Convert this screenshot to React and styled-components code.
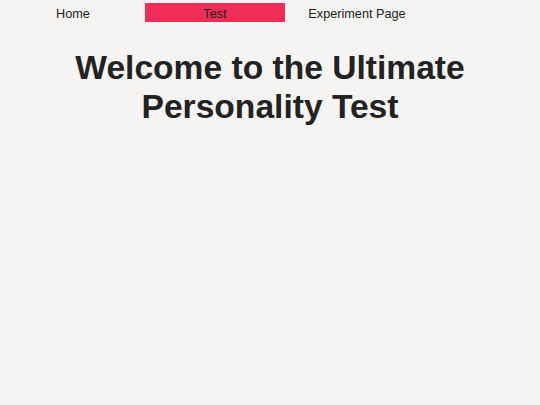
import React from "react";
import styled, { createGlobalStyle } from "styled-components";

const GlobalStyle = createGlobalStyle`
  html, body {
    margin: 0;
    padding: 0;
    background: #f5f4f2;
    font-family: "Liberation Sans", Arial, sans-serif;
    color: #222;
  }
`;

const Page = styled.div`
  min-height: 405px;
  background: #f5f4f2;
`;

const Nav = styled.ul`
  display: flex;
  gap: 2px;
  list-style: none;
  margin: 0;
  padding: 3px 0 0 3px;
`;

const NavItem = styled.li`
  box-sizing: border-box;
  width: 140px;
  height: 19px;
  padding-top: 3px;
  line-height: 16px;
  text-align: center;
  font-size: 12.7px;
  color: #222;
  background: ${(p) => (p.$active ? "#ef2d56" : "transparent")};
`;

const Title = styled.h1`
  margin: 26px 0 0;
  text-align: center;
  font-size: 33.6px;
  line-height: 39px;
  font-weight: 700;
  color: #222;
`;

export default function App() {
  return (
    <Page>
      <GlobalStyle />
      <Nav>
        <NavItem>Home</NavItem>
        <NavItem $active>Test</NavItem>
        <NavItem>Experiment Page</NavItem>
      </Nav>
      <Title>
        Welcome to the Ultimate
        <br />
        Personality Test
      </Title>
    </Page>
  );
}
